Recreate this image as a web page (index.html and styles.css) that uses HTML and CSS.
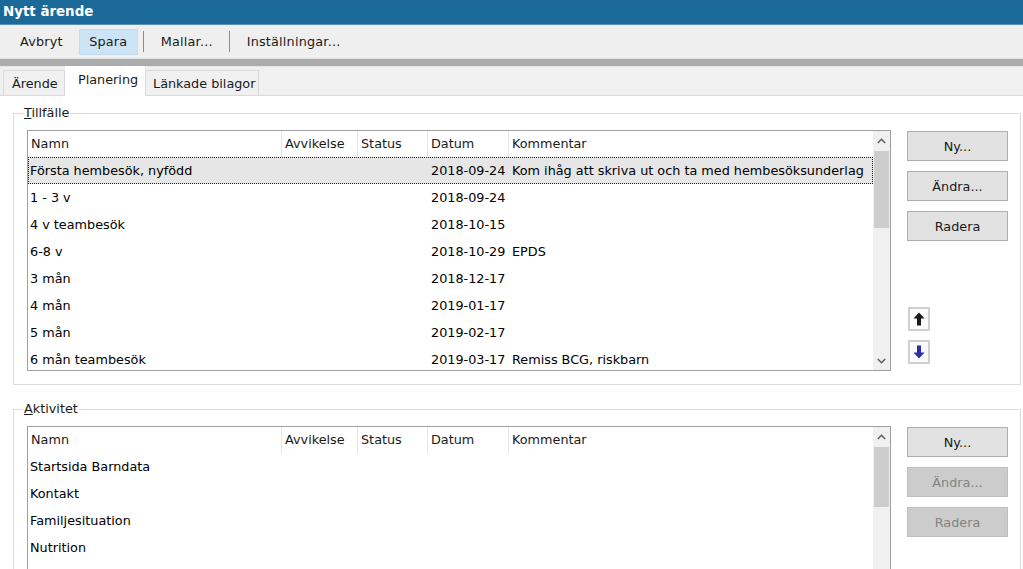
FILE: index.html
```html
<!DOCTYPE html>
<html lang="sv">
<head>
<meta charset="utf-8">
<title>Nytt ärende</title>
<link rel="stylesheet" href="styles.css">
</head>
<body>
<div class="window">
  <div class="titlebar">Nytt ärende</div>
  <div class="toolbar">
    <span class="tool avbryt">Avbryt</span>
    <span class="tool active">Spara</span>
    <span class="sep"></span>
    <span class="tool mallar">Mallar...</span>
    <span class="sep"></span>
    <span class="tool">Inställningar...</span>
  </div>
  <div class="splitter"></div>
  <div class="tabs">
    <span class="tab t-arende">Ärende</span>
    <span class="tab selected">Planering</span>
    <span class="tab t-lank">Länkade bilagor</span>
  </div>
  <div class="page">
    <fieldset class="group">
      <legend><u>T</u>illfälle</legend>
      <div class="group-body">
        <div class="listbox tall">
          <div class="table">
            <div class="row header">
              <span class="c">Namn</span><span class="c">Avvikelse</span><span class="c">Status</span><span class="c">Datum</span><span class="c">Kommentar</span>
            </div>
            <div class="row sel">
              <span class="c">Första hembesök, nyfödd</span><span class="c"></span><span class="c"></span><span class="c">2018-09-24</span><span class="c">Kom ihåg att skriva ut och ta med hembesöksunderlag</span>
            </div>
            <div class="row">
              <span class="c">1 - 3 v</span><span class="c"></span><span class="c"></span><span class="c">2018-09-24</span><span class="c"></span>
            </div>
            <div class="row">
              <span class="c">4 v teambesök</span><span class="c"></span><span class="c"></span><span class="c">2018-10-15</span><span class="c"></span>
            </div>
            <div class="row">
              <span class="c">6-8 v</span><span class="c"></span><span class="c"></span><span class="c">2018-10-29</span><span class="c">EPDS</span>
            </div>
            <div class="row">
              <span class="c">3 mån</span><span class="c"></span><span class="c"></span><span class="c">2018-12-17</span><span class="c"></span>
            </div>
            <div class="row">
              <span class="c">4 mån</span><span class="c"></span><span class="c"></span><span class="c">2019-01-17</span><span class="c"></span>
            </div>
            <div class="row">
              <span class="c">5 mån</span><span class="c"></span><span class="c"></span><span class="c">2019-02-17</span><span class="c"></span>
            </div>
            <div class="row">
              <span class="c">6 mån teambesök</span><span class="c"></span><span class="c"></span><span class="c">2019-03-17</span><span class="c">Remiss BCG, riskbarn</span>
            </div>
          </div>
          <div class="scrollbar">
            <span class="arrow up"><svg width="9" height="6" viewBox="0 0 9 6"><path d="M0.8 5 L4.5 1.3 L8.2 5" fill="none" stroke="#606060" stroke-width="1.6"/></svg></span>
            <span class="thumb t1"></span>
            <span class="track"></span>
            <span class="arrow down"><svg width="9" height="6" viewBox="0 0 9 6"><path d="M0.8 1 L4.5 4.7 L8.2 1" fill="none" stroke="#606060" stroke-width="1.6"/></svg></span>
          </div>
        </div>
        <div class="side">
          <button class="btn">Ny...</button>
          <button class="btn">Ändra...</button>
          <button class="btn">Radera</button>
          <div class="movers">
            <span class="mover"><svg width="12" height="14" viewBox="0 0 12 14"><path d="M6 0.5 L11.5 6.5 L8 6.5 L8 13.5 L4 13.5 L4 6.5 L0.5 6.5 Z" fill="#1a1a1a"/></svg></span>
            <span class="mover"><svg width="12" height="14" viewBox="0 0 12 14"><path d="M6 13.5 L11.5 7.5 L8 7.5 L8 0.5 L4 0.5 L4 7.5 L0.5 7.5 Z" fill="#2a2fa8"/></svg></span>
          </div>
        </div>
      </div>
    </fieldset>

    <fieldset class="group">
      <legend><u>A</u>ktivitet</legend>
      <div class="group-body">
        <div class="listbox">
          <div class="table">
            <div class="row header">
              <span class="c">Namn</span><span class="c">Avvikelse</span><span class="c">Status</span><span class="c">Datum</span><span class="c">Kommentar</span>
            </div>
            <div class="row"><span class="c">Startsida Barndata</span></div>
            <div class="row"><span class="c">Kontakt</span></div>
            <div class="row"><span class="c">Familjesituation</span></div>
            <div class="row"><span class="c">Nutrition</span></div>
          </div>
          <div class="scrollbar">
            <span class="arrow up"><svg width="9" height="6" viewBox="0 0 9 6"><path d="M0.8 5 L4.5 1.3 L8.2 5" fill="none" stroke="#606060" stroke-width="1.6"/></svg></span>
            <span class="thumb t2"></span>
            <span class="track"></span>
          </div>
        </div>
        <div class="side">
          <button class="btn">Ny...</button>
          <button class="btn" disabled>Ändra...</button>
          <button class="btn" disabled>Radera</button>
        </div>
      </div>
    </fieldset>
  </div>
</div>
</body>
</html>
```

FILE: styles.css
```css
html, body {
  margin: 0;
  padding: 0;
  width: 1023px;
  height: 569px;
  overflow: hidden;
  background: #ffffff;
}

body {
  font-family: "DejaVu Sans", sans-serif;
  font-size: 12.8px;
  color: #000;
}

.window {
  display: flex;
  flex-direction: column;
  height: 569px;
}

.titlebar {
  height: 24px;
  line-height: 24px;
  padding-left: 3px;
  background: #1b6998;
  border-bottom: 1px solid #5b8fb4;
  color: #fff;
  font-weight: bold;
  font-size: 13.4px;
}

.toolbar {
  height: 33px;
  background: #efefef;
  display: flex;
  align-items: center;
  padding-left: 11px;
  box-sizing: border-box;
}

.tool {
  height: 26px;
  line-height: 26px;
  padding: 0 9px;
  box-sizing: border-box;
  color: #1a1a1a;
  letter-spacing: 0.2px;
}

.tool.avbryt {
  margin-right: 7px;
}

.tool.active {
  width: 59px;
  text-align: center;
  padding: 0;
  background: #cde4f6;
  border: 1px solid #c4dcf1;
  line-height: 24px;
}

.tool.mallar {
  margin-right: 2px;
}

.sep {
  width: 1px;
  height: 21px;
  background: #8c8c8c;
  margin: 0 8px 0 5px;
}

.splitter {
  height: 9px;
  background: #ababab;
  border-top: 1px solid #e2e2e2;
  border-bottom: 1px solid #e6e6e6;
  box-sizing: border-box;
}

.tabs {
  height: 29px;
  background: #f0f0f0;
  display: flex;
  align-items: flex-end;
  padding-left: 3px;
  border-bottom: 1px solid #dadada;
  box-sizing: border-box;
}

.tab {
  height: 25px;
  line-height: 25px;
  padding: 0 0 0 8px;
  border: 1px solid #d9d9d9;
  border-bottom: none;
  box-sizing: border-box;
  background: #f0f0f0;
  color: #1a1a1a;
}

.tab.t-arende {
  width: 62px;
}

.tab.t-lank {
  width: 114px;
  padding-left: 7px;
}

.tab.selected {
  width: 80px;
  line-height: 25px;
  background: #fff;
  padding: 0 0 0 12px;
  margin-bottom: -1px;
  height: 30px;
  border-color: #ffffff;
}

.page {
  flex: 1;
  background: #fff;
  padding: 9px 2px 0 13px;
  overflow: hidden;
}

.group {
  margin: 0 0 16px 0;
  padding: 9px 13px 13px 13px;
  border: 1px solid #dcdcdc;
  min-width: 0;
}

.group legend {
  padding: 0 1px;
  margin-left: -4px;
  line-height: 16px;
  color: #1a1a1a;
}

.group-body {
  display: flex;
  align-items: flex-start;
}

.listbox {
  width: 864px;
  border: 1px solid #a0a0a0;
  box-sizing: border-box;
  display: flex;
  height: 160px;
  flex: none;
}

.listbox.tall {
  height: 241px;
  overflow: hidden;
}

.table {
  flex: 1;
  overflow: hidden;
}

.row {
  display: grid;
  grid-template-columns: 254px 76px 70px 81px 1fr;
  height: 27px;
  line-height: 27px;
  white-space: nowrap;
  box-sizing: border-box;
}

.row .c {
  padding-left: 3px;
  overflow: hidden;
}

.row .c:first-child {
  padding-left: 2px;
}

.row.header {
  height: 26px;
  line-height: 26px;
}

.row.header .c {
  border-right: 1px solid #e5e5e5;
  padding-left: 3px;
  color: #1a1a1a;
}

.row.header .c:last-child {
  border-right: none;
}

.row.sel {
  background: #e6e6e6;
  outline: 1px dotted #202020;
  outline-offset: -1px;
}

.scrollbar {
  width: 17px;
  background: #f0f0f0;
  display: flex;
  flex-direction: column;
  flex: none;
}

.arrow {
  height: 20px;
  display: flex;
  align-items: center;
  justify-content: center;
  flex: none;
}

.arrow.down {
  margin-top: auto;
  height: 19px;
}

.thumb {
  background: #cdcdcd;
  flex: none;
  margin: 0 1px;
}

.thumb.t1 {
  height: 77px;
}

.thumb.t2 {
  height: 60px;
}

.track {
  flex: 1;
}

.side {
  display: flex;
  flex-direction: column;
  margin-left: 16px;
  margin-top: 1px;
  gap: 10px;
}

.btn {
  width: 101px;
  height: 30px;
  background: #e1e1e1;
  border: 1px solid #adadad;
  font-family: inherit;
  font-size: 12.8px;
  color: #1a1a1a;
  padding: 0;
}

.btn:disabled {
  background: #cccccc;
  border-color: #bfbfbf;
  color: #838383;
}

.movers {
  display: flex;
  flex-direction: column;
  gap: 9px;
  margin-top: 56px;
  margin-left: 1px;
}

.mover {
  width: 22px;
  height: 24px;
  border: 2px solid #cfcfcf;
  box-sizing: border-box;
  background: #fbfbfb;
  display: flex;
  align-items: center;
  justify-content: center;
}
```
